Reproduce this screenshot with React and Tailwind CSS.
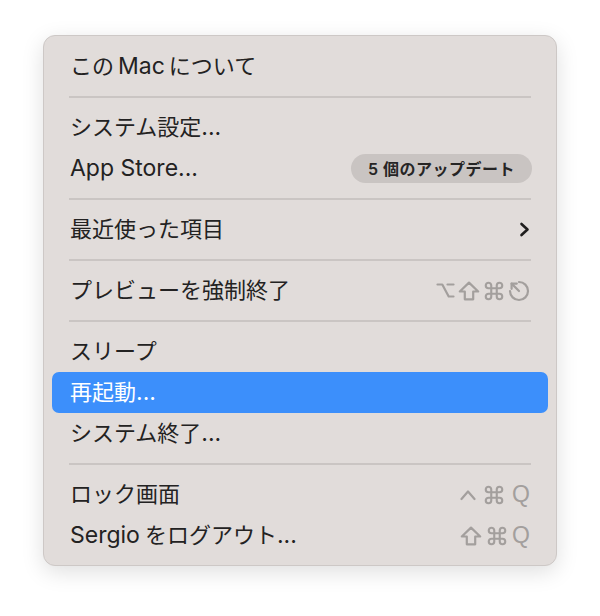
import React from 'react';
import { Command } from 'lucide-react';

const font = { fontFamily: '"Inter", "Noto Sans CJK JP", sans-serif' };

function OptionKey() {
  return (
    <svg width="19" height="17" viewBox="0 0 19 17" fill="none" stroke="currentColor" strokeWidth="2.2" strokeLinecap="round" strokeLinejoin="round">
      <path d="M1.5 2.5h4.8l6.4 12h4.8" />
      <path d="M11.5 2.5h6" />
    </svg>
  );
}

function ShiftKey() {
  return (
    <svg width="22" height="20" viewBox="0 0 22 20" fill="none" stroke="currentColor" strokeWidth="2.2" strokeLinejoin="round">
      <path d="M11 1.6 20.2 10.5h-5v7.8H6.8v-7.8H1.8z" />
    </svg>
  );
}

function CmdKey() {
  return <Command size={22} strokeWidth={2.3} />;
}

function EscKey() {
  return (
    <svg width="22" height="22" viewBox="0 0 22 22" fill="none" stroke="currentColor" strokeWidth="2.2" strokeLinecap="round" strokeLinejoin="round">
      <path d="M11 2a9 9 0 1 1-9 9" />
      <path d="M3.6 3.6 11 11" />
      <path d="M3.6 8.8V3.6H8.8" />
    </svg>
  );
}

function CtrlKey() {
  return (
    <svg width="16" height="12" viewBox="0 0 16 12" fill="none" stroke="currentColor" strokeWidth="2.2" strokeLinecap="round" strokeLinejoin="round">
      <path d="M1.5 10 8 2.5l6.5 7.5" />
    </svg>
  );
}

function QKey() {
  return <span className="text-[23px] leading-none" style={{ fontFamily: '"Liberation Sans", sans-serif' }}>Q</span>;
}

function Chevron() {
  return (
    <svg width="11" height="15" viewBox="0 0 11 15" fill="none" stroke="#1f1e1e" strokeWidth="2.6" strokeLinecap="round" strokeLinejoin="round">
      <path d="M2.5 2 8.5 7.5 2.5 13" />
    </svg>
  );
}

function L({ children, className = '' }) {
  return <span className={`text-[23px] ${className}`}>{children}</span>;
}

function Item({ label, active, children }) {
  return (
    <div
      className={`mx-[8px] flex h-[41px] items-center justify-between rounded-[7px] pl-[18px] pr-[18px] text-[22px] ${
        active ? 'bg-[#3c8ffb] text-white' : 'text-[#232222]'
      }`}
    >
      <span className="flex items-baseline whitespace-nowrap">{label}</span>
      {children}
    </div>
  );
}

function Separator() {
  return (
    <div className="flex h-[20px] items-center px-[25px]">
      <div className="h-[1.5px] w-full bg-[#cac5c3]" />
    </div>
  );
}

export default function App() {
  return (
    <div className="flex h-[616px] w-[600px] justify-center bg-white pt-[35px]" style={font}>
      <div className="h-[531px] w-[514px] rounded-[12px] border border-[#cdc8c6] bg-[#e1dcda] pb-[9px] pt-[10px] shadow-[0_6px_22px_rgba(0,0,0,0.13)]">
        <Item label={<>この<L className="mx-[4px]">Mac</L>について</>} />
        <Separator />
        <Item label={<>システム設定<L>...</L></>} />
        <Item label={<L>App Store...</L>}>
          <span className="-mr-[2px] flex h-[29px] w-[181px] items-center justify-center rounded-full bg-[#c9c4c2] text-[16px] font-semibold tracking-[0.5px] text-[#262525]">
            5 個のアップデート
          </span>
        </Item>
        <Separator />
        <Item label="最近使った項目">
          <Chevron />
        </Item>
        <Separator />
        <Item label="プレビューを強制終了">
          <span className="flex items-center gap-[3px] text-[#a39f9d]">
            <OptionKey />
            <ShiftKey />
            <CmdKey />
            <EscKey />
          </span>
        </Item>
        <Separator />
        <Item label="スリープ" />
        <Item label={<>再起動<L>...</L></>} active />
        <Item label={<>システム終了<L>...</L></>} />
        <Separator />
        <Item label="ロック画面">
          <span className="flex items-center gap-[7px] text-[#a39f9d]">
            <CtrlKey />
            <CmdKey />
            <QKey />
          </span>
        </Item>
        <Item label={<><L className="mr-[5px]">Sergio</L>をログアウト<L>...</L></>}>
          <span className="flex items-center gap-[4px] text-[#a39f9d]">
            <ShiftKey />
            <CmdKey />
            <QKey />
          </span>
        </Item>
      </div>
    </div>
  );
}
